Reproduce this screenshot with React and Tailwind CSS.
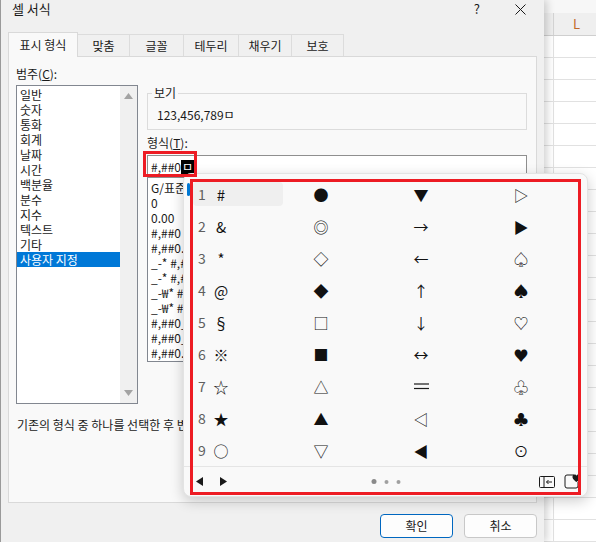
import React from "react";

const categories = ["일반","숫자","통화","회계","날짜","시간","백분율","분수","지수","텍스트","기타","사용자 지정"];
const formats = ["G/표준","0","0.00","#,##0","#,##0.00","_-* #,##0_-;-* #,##0_-;_-* \"-\"_-;_-@_-","_-* #,##0.00_-;-* #,##0.00_-","_-₩* #,##0_-;-₩* #,##0_-","_-₩* #,##0.00_-;-₩* #,##0.00_-","#,##0_);(#,##0)","#,##0_);[빨강](#,##0)","#,##0.00_);(#,##0.00)"];
const tabs = [["표시 형식",70],["맞춤",52],["글꼴",54],["테두리",55],["채우기",53],["보호",52]];

const grid = [
  ["#","●","▼","▷"],
  ["&","◎","→","▶"],
  ["*","◇","←","♤"],
  ["@","◆","↑","♠"],
  ["§","□","↓","♡"],
  ["※","■","↔","♥"],
  ["☆","△","〓","♧"],
  ["★","▲","◁","♣"],
  ["○","▽","◀","⊙"],
];

function Sym({ s }) {
  if (s === "〓") {
    return (
      <svg width="15" height="7" viewBox="0 0 15 7">
        <line x1="0" y1="1" x2="15" y2="1" stroke="#1a1a1a" strokeWidth="1.2" />
        <line x1="0" y1="5.5" x2="15" y2="5.5" stroke="#1a1a1a" strokeWidth="1.2" />
      </svg>
    );
  }
  return <span className="leading-none">{s}</span>;
}

export default function App() {
  return (
    <div className="relative w-[596px] h-[542px] overflow-hidden flex bg-white font-['Noto_Sans_CJK_KR','Noto_Sans',sans-serif] text-[#1a1a1a]">
      {/* Dialog */}
      <div className="relative z-10 w-[544px] h-full shrink-0 bg-[#f0f0f0] border-l border-[#9a9a9a] shadow-[3px_0_8px_rgba(0,0,0,0.18)] flex flex-col">
        {/* title bar */}
        <div className="h-[32px] shrink-0">
          <div className="h-[18px] flex items-center">
            <span className="ml-[11px] text-[13px] leading-[18px]">셀 서식</span>
            <span className="ml-auto text-[13px] leading-[18px] mr-[35px]">?</span>
            <svg width="11" height="11" viewBox="0 0 11 11" className="mr-[18px]">
              <line x1="0.5" y1="0.5" x2="10.5" y2="10.5" stroke="#1a1a1a" strokeWidth="1" />
              <line x1="10.5" y1="0.5" x2="0.5" y2="10.5" stroke="#1a1a1a" strokeWidth="1" />
            </svg>
          </div>
        </div>
        {/* tabs */}
        <div className="h-[24px] shrink-0 flex items-end pl-[7px]">
          {tabs.map(([t, w], i) =>
            i === 0 ? (
              <div key={t} style={{ width: w }} className="relative z-10 h-[25px] -mb-px bg-[#f9f9f9] border border-b-0 border-[#d9d9d9] flex items-center justify-center text-[12px]">
                {t}
              </div>
            ) : (
              <div key={t} style={{ width: w }} className="h-[22px] bg-[#f0f0f0] border-t border-r border-[#dcdcdc] flex items-center justify-center text-[12px]">
                {t}
              </div>
            )
          )}
        </div>
        {/* panel */}
        <div className="ml-[7px] w-[529px] h-[447px] shrink-0 bg-[#f9f9f9] border border-[#d9d9d9] flex flex-col">
          <div className="flex pl-[7px]">
            {/* left column */}
            <div className="w-[122px] flex flex-col">
              <div className="mt-[9px] h-[16px] leading-[16px] text-[12px]">
                범주(<span className="underline">C</span>):
              </div>
              <div className="mt-[3px] h-[319px] bg-white border border-[#828790] flex">
                <div className="flex-1 pt-[1px]">
                  {categories.map((c, i) => (
                    <div key={c} className={`h-[15px] leading-[15px] text-[12px] pl-[3px] ${i === 11 ? "bg-[#0078d7] text-white" : ""}`}>
                      {c}
                    </div>
                  ))}
                </div>
                <div className="w-[17px] bg-[#f0f0f0] flex flex-col items-center justify-between py-[7px]">
                  <svg width="9" height="6" viewBox="0 0 9 6"><path d="M4.5 0 L9 6 L0 6 Z" fill="#a3a3a3" /></svg>
                  <svg width="9" height="6" viewBox="0 0 9 6"><path d="M0 0 L9 0 L4.5 6 Z" fill="#a3a3a3" /></svg>
                </div>
              </div>
            </div>
            {/* right column */}
            <div className="ml-[9px] w-[380px] flex flex-col">
              <div className="relative mt-[36px] h-[37px] border border-[#dcdcdc]">
                <span className="absolute -top-[9px] left-[4px] px-[2px] bg-[#f9f9f9] text-[12px] leading-[16px]">보기</span>
                <div className="pt-[13px] pl-[9px] text-[12px] leading-[16px]">123,456,789ㅁ</div>
              </div>
              <div className="mt-[5px] h-[16px] leading-[16px] text-[12px]">
                형식(<span className="underline">T</span>):
              </div>
              <div className="mt-[4px] h-[23px] bg-white border border-[#8f8f8f] flex items-center pl-[3px] text-[12px]">
                <span>#,##0</span>
                <span className="bg-black text-white leading-[14px] px-[1px]">ㅁ</span>
              </div>
              <div className="h-[184px] bg-white border border-t-0 border-[#828790] pt-[2px] overflow-hidden">
                {formats.map((f) => (
                  <div key={f} className="h-[15px] leading-[15px] text-[12px] pl-[3px] whitespace-nowrap">{f}</div>
                ))}
              </div>
            </div>
          </div>
          <div className="mt-[13px] ml-[8px] h-[16px] leading-[16px] text-[12px] whitespace-nowrap">
            기존의 형식 중 하나를 선택한 후 변경하십시오.
          </div>
        </div>
        {/* buttons */}
        <div className="mt-[11px] flex justify-end gap-[11px] pr-[7px]">
          <div className="w-[73px] h-[24px] rounded-[4px] bg-[#fdfdfd] border-[1.5px] border-[#0067c0] flex items-center justify-center text-[12px]">확인</div>
          <div className="w-[73px] h-[24px] rounded-[4px] bg-[#fdfdfd] border border-[#c8c8c8] flex items-center justify-center text-[12px]">취소</div>
        </div>
      </div>

      {/* Sheet */}
      <div className="flex-1 flex flex-col bg-white">
        <div className="h-[14px] bg-[#f7f7f7]" />
        <div className="h-[24px] bg-[#efefef] border-b border-[#cfcfcf] flex">
          <div className="w-[10px] border-r border-[#d4d4d4]" />
          <div className="flex-1 flex items-center pl-[19px] text-[13px] text-[#c0692a]">L</div>
        </div>
        {Array.from({ length: 23 }).map((_, i) => (
          <div key={i} className="h-[22px] shrink-0 border-b border-[#e1e1e1] flex">
            <div className="w-[10px] border-r border-[#e1e1e1]" />
          </div>
        ))}
      </div>

      {/* Symbol popup */}
      <div className="absolute z-20 left-[183px] top-[173px] w-[405px] h-[324px] bg-[#f9f9f9] rounded-[8px] border border-[#e3e3e3] shadow-[0_4px_14px_rgba(0,0,0,0.2)] flex flex-col">
        <div className="pt-[8px] pl-[9px] flex flex-col gap-[8px]">
          {grid.map((row, r) => (
            <div key={r} className="flex gap-[10px]">
              {row.map((s, c) => (
                <div key={c} className={`w-[90px] h-[24px] rounded-[4px] flex items-center pl-[5px] ${r === 0 && c === 0 ? "bg-[#efefef]" : ""}`}>
                  <span className="w-[12px] mr-[1px] text-[14px] leading-none text-[#5f5f5f]">{c === 0 ? r + 1 : ""}</span>
                  <span className="w-[20px] flex items-center justify-center text-[15px] leading-none text-[#111111]">
                    <Sym s={s} />
                  </span>
                </div>
              ))}
            </div>
          ))}
        </div>
        <div className="mt-[4px] border-t border-[#e5e5e5] flex-1 relative flex items-center">
          <svg width="7" height="9" viewBox="0 0 7 9" className="ml-[12px]"><path d="M7 0 L7 9 L0 4.5 Z" fill="#1a1a1a" /></svg>
          <svg width="7" height="9" viewBox="0 0 7 9" className="ml-[17px]"><path d="M0 0 L7 4.5 L0 9 Z" fill="#1a1a1a" /></svg>
          <div className="absolute left-1/2 -translate-x-1/2 flex items-center gap-[8px]">
            <span className="w-[5px] h-[5px] rounded-full bg-[#8a8a8a]" />
            <span className="w-[4px] h-[4px] rounded-full bg-[#a0a0a0]" />
            <span className="w-[4px] h-[4px] rounded-full bg-[#a0a0a0]" />
          </div>
          <svg width="16" height="12" viewBox="0 0 16 12" className="ml-auto mr-[9px]">
            <rect x="0.5" y="0.5" width="15" height="11" rx="1" fill="none" stroke="#1a1a1a" strokeWidth="1" />
            <line x1="5" y1="0.5" x2="5" y2="11.5" stroke="#1a1a1a" strokeWidth="1" />
            <line x1="13" y1="6" x2="7.5" y2="6" stroke="#1a1a1a" strokeWidth="1" />
            <path d="M9.5 4 L7.5 6 L9.5 8" fill="none" stroke="#1a1a1a" strokeWidth="1" />
          </svg>
          <svg width="16" height="15" viewBox="0 0 16 15" className="mr-[7px]">
            <path d="M10 1 H3 A2 2 0 0 0 1 3 V12 A2 2 0 0 0 3 14 H12 A2 2 0 0 0 14 12 V8" fill="none" stroke="#1a1a1a" strokeWidth="1" />
            <path d="M12.5 8 C9 5.5 8.5 4 8.5 2.7 C8.5 1.4 9.5 0.5 10.6 0.5 C11.5 0.5 12.2 1 12.5 1.8 C12.8 1 13.5 0.5 14.4 0.5 C15.5 0.5 16.5 1.4 16.5 2.7 C16.5 4 16 5.5 12.5 8 Z" fill="#1a1a1a" />
          </svg>
        </div>
      </div>

      {/* blue indicator */}
      <div className="absolute z-30 left-[187px] top-[183px] w-[3px] h-[13px] rounded-full bg-[#0078d4]" />

      {/* red annotation boxes */}
      <div className="absolute z-40 left-[143px] top-[151px] w-[54px] h-[26px] border-[3px] border-[#ed1c24]" />
      <div className="absolute z-40 left-[190px] top-[179px] w-[391px] h-[316px] border-[3px] border-[#ed1c24]" />
    </div>
  );
}
